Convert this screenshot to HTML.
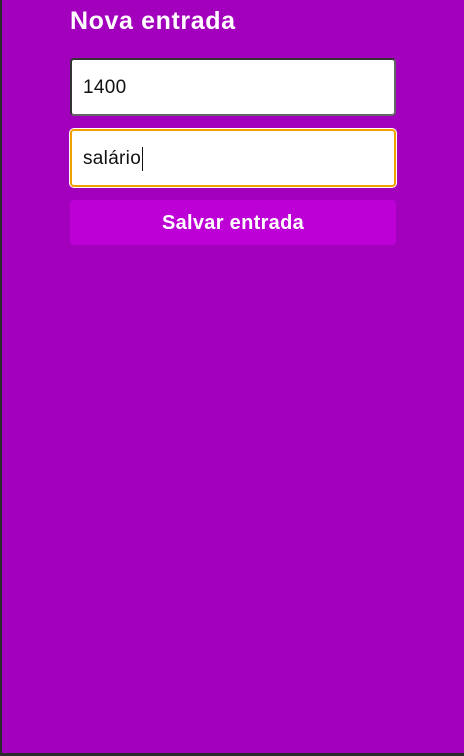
<!DOCTYPE html>
<html><head><meta charset="utf-8"><style>
html,body{margin:0;padding:0;}
body{width:464px;height:756px;background:#a300bd;position:relative;overflow:hidden;font-family:"Liberation Sans",sans-serif;}
.lb{position:absolute;left:0;top:0;width:2px;height:756px;background:#2a2a2a;}
.bb{position:absolute;left:0;bottom:0;width:464px;height:3px;background:#2a2a2a;}
h1{position:absolute;left:70px;top:7px;margin:0;font-size:25px;font-weight:bold;color:#fff;letter-spacing:0.6px;}
.in{position:absolute;left:70px;width:326px;box-sizing:border-box;background:#fff;border-radius:4px;font-size:19px;color:#111;padding-left:11px;letter-spacing:0.3px;}
.i1{top:58px;height:58px;border:2px solid #333;border-right-color:#666;border-bottom-color:#666;line-height:56px;}
.i2{top:129px;height:58px;border:2px solid #f0a000;box-shadow:0 0 0 1px #fff;line-height:56px;}
.caret{display:inline-block;width:1px;height:24px;background:#111;vertical-align:middle;margin-left:1px;}
.btn{position:absolute;left:70px;top:200px;width:326px;height:45px;background:#bd00d6;border-radius:4px;color:#fff;font-weight:bold;font-size:20px;text-align:center;line-height:46px;letter-spacing:0.3px;}
</style></head><body>
<div class="lb"></div><div class="bb"></div>
<h1>Nova entrada</h1>
<div class="in i1">1400</div>
<div class="in i2">salário<span class="caret"></span></div>
<div class="btn">Salvar entrada</div>
</body></html>
